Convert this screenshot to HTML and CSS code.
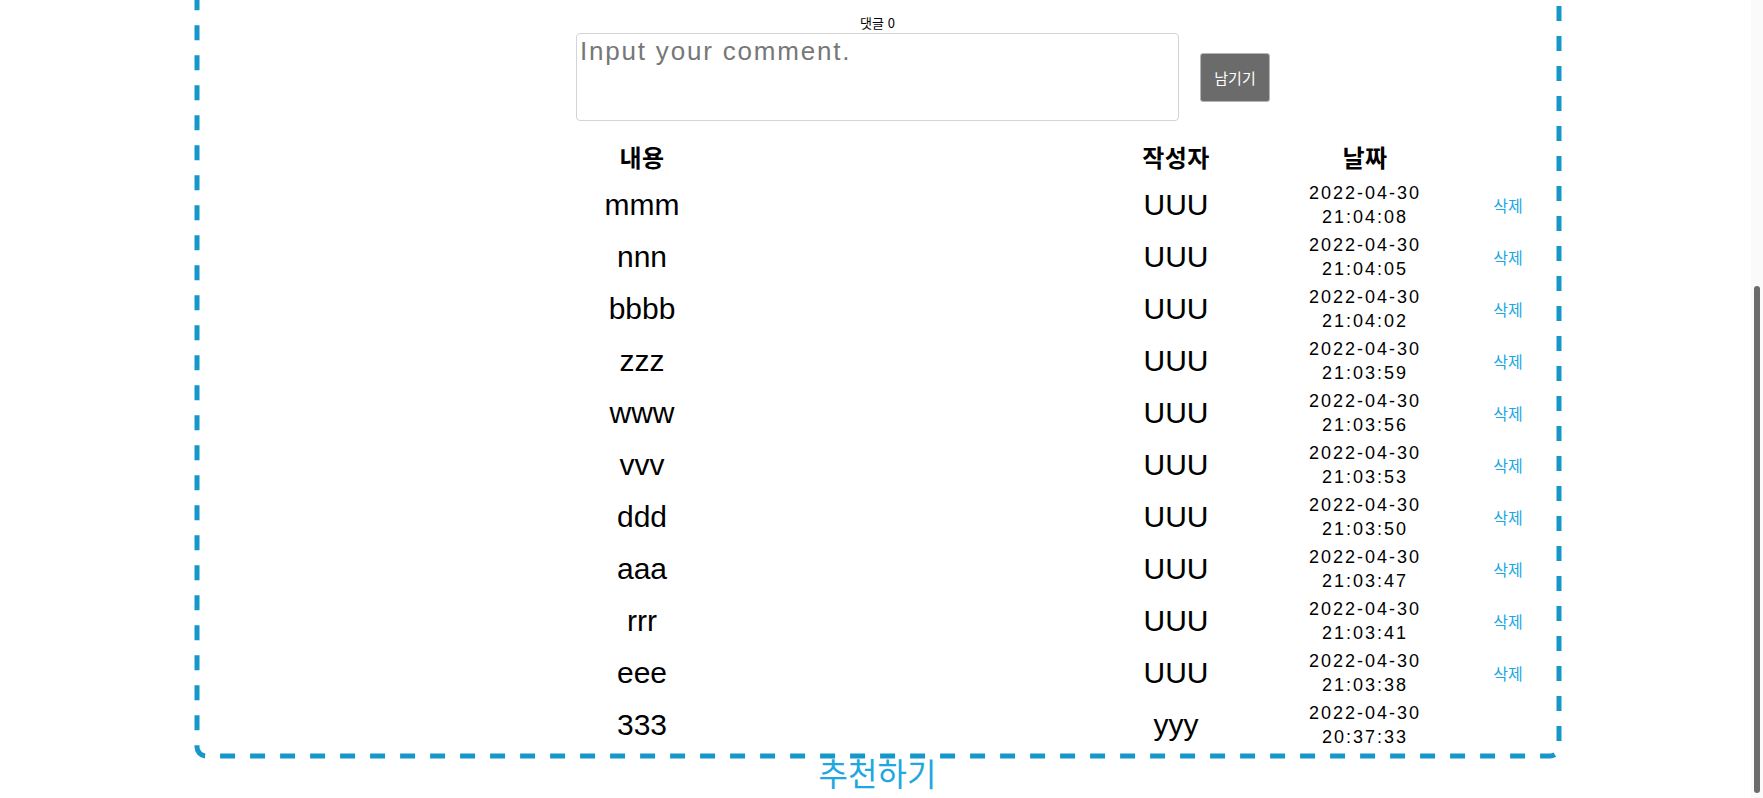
FILE: index.html
```html
<!DOCTYPE html>
<html lang="ko">
<head>
<meta charset="utf-8">
<title>게시글</title>
<link rel="stylesheet" href="styles.css">
</head>
<body>
<main class="page">
  <section class="post-box">
    <svg class="dash-frame" aria-hidden="true"><rect class="dash-rect" x="0" y="0" width="100%" height="100%" rx="9" ry="9"></rect></svg>
    <div class="post-body"></div>
    <div class="comments">
      <p class="comment-count">댓글 0</p>
      <form class="comment-form">
        <textarea class="comment-input" placeholder="Input your comment."></textarea>
        <button type="button" class="submit-btn">남기기</button>
      </form>
      <div class="comment-table">
        <div class="row head">
          <div class="cell c-content">내용</div>
          <div class="cell c-author">작성자</div>
          <div class="cell c-date">날짜</div>
          <div class="cell c-del"></div>
        </div>
        <div class="row"><div class="cell c-content">mmm</div><div class="cell c-author">UUU</div><div class="cell c-date">2022-04-30<br>21:04:08</div><div class="cell c-del"><a class="del">삭제</a></div></div>
        <div class="row"><div class="cell c-content">nnn</div><div class="cell c-author">UUU</div><div class="cell c-date">2022-04-30<br>21:04:05</div><div class="cell c-del"><a class="del">삭제</a></div></div>
        <div class="row"><div class="cell c-content">bbbb</div><div class="cell c-author">UUU</div><div class="cell c-date">2022-04-30<br>21:04:02</div><div class="cell c-del"><a class="del">삭제</a></div></div>
        <div class="row"><div class="cell c-content">zzz</div><div class="cell c-author">UUU</div><div class="cell c-date">2022-04-30<br>21:03:59</div><div class="cell c-del"><a class="del">삭제</a></div></div>
        <div class="row"><div class="cell c-content">www</div><div class="cell c-author">UUU</div><div class="cell c-date">2022-04-30<br>21:03:56</div><div class="cell c-del"><a class="del">삭제</a></div></div>
        <div class="row"><div class="cell c-content">vvv</div><div class="cell c-author">UUU</div><div class="cell c-date">2022-04-30<br>21:03:53</div><div class="cell c-del"><a class="del">삭제</a></div></div>
        <div class="row"><div class="cell c-content">ddd</div><div class="cell c-author">UUU</div><div class="cell c-date">2022-04-30<br>21:03:50</div><div class="cell c-del"><a class="del">삭제</a></div></div>
        <div class="row"><div class="cell c-content">aaa</div><div class="cell c-author">UUU</div><div class="cell c-date">2022-04-30<br>21:03:47</div><div class="cell c-del"><a class="del">삭제</a></div></div>
        <div class="row"><div class="cell c-content">rrr</div><div class="cell c-author">UUU</div><div class="cell c-date">2022-04-30<br>21:03:41</div><div class="cell c-del"><a class="del">삭제</a></div></div>
        <div class="row"><div class="cell c-content">eee</div><div class="cell c-author">UUU</div><div class="cell c-date">2022-04-30<br>21:03:38</div><div class="cell c-del"><a class="del">삭제</a></div></div>
        <div class="row"><div class="cell c-content">333</div><div class="cell c-author">yyy</div><div class="cell c-date">2022-04-30<br>20:37:33</div><div class="cell c-del"></div></div>
      </div>
    </div>
  </section>
  <p class="recommend">추천하기</p>
</main>
<div class="scrollbar" aria-hidden="true"><div class="scroll-thumb"></div></div>
<script src="script.js"></script>
</body>
</html>
```

FILE: styles.css
```css
html {
  background: #ffffff;
}
body {
  margin: 0;
  font-family: "Liberation Sans", "Noto Sans CJK KR", sans-serif;
  color: #000;
}
.page {
  padding: 8px 0 12px;
}
.post-box {
  position: relative;
  box-sizing: border-box;
  width: 1367px;
  margin-left: 194px;
  padding: 5px 5px 7px;
}
.dash-frame {
  position: absolute;
  top: 2.5px;
  left: 2.5px;
  width: calc(100% - 5px);
  height: calc(100% - 5px);
  overflow: visible;
  pointer-events: none;
}
.dash-rect {
  fill: none;
  stroke: #1597c9;
  stroke-width: 5;
  stroke-dasharray: 15 15;
  stroke-dashoffset: 28;
}
.post-body {
  height: 460px;
}
.comments {
  display: flex;
  flex-direction: column;
  align-items: center;
}
.comment-count {
  margin: 0 0 3px;
  font-family: "Noto Sans CJK KR", "Liberation Sans", sans-serif;
  font-size: 13px;
  line-height: 15px;
  height: 15px;
}
.comment-form {
  display: flex;
  align-items: center;
  gap: 21px;
  width: 603px;
  margin: 0;
}
.comment-input {
  flex: 0 0 603px;
  box-sizing: border-box;
  height: 88px;
  margin: 0;
  padding: 2px 3px;
  border: 1px solid #d4d4d4;
  border-radius: 4px;
  resize: none;
  font-family: "Liberation Sans", sans-serif;
  font-size: 26px;
  letter-spacing: 1.8px;
  line-height: 30px;
}
.comment-input::placeholder {
  color: #777777;
}
.submit-btn {
  flex: 0 0 70px;
  box-sizing: border-box;
  height: 49px;
  padding: 0;
  background: #6b6b6b;
  color: #ffffff;
  border: 1px solid #b5b5b5;
  border-radius: 3px;
  font-family: "Noto Sans CJK KR", sans-serif;
  font-size: 15px;
}
.comment-table {
  margin-top: 18px;
  width: 603px;
}
.row {
  display: grid;
  grid-template-columns: 132px 534px 246px 40px;
  width: 952px;
  height: 52px;
  align-items: center;
}
.row.head {
  height: 40px;
  align-items: start;
}
.cell {
  text-align: center;
  white-space: nowrap;
}
.c-content,
.c-author {
  font-size: 30px;
  line-height: 36px;
}
.c-author {
  justify-self: end;
  width: 132px;
}
.c-date {
  font-size: 18px;
  letter-spacing: 2px;
  line-height: 24px;
}
.head .cell {
  font-family: "Noto Sans CJK KR", sans-serif;
  font-weight: bold;
  font-size: 24px;
  line-height: 36px;
  letter-spacing: 0.5px;
}
.del {
  font-family: "Noto Sans CJK KR", sans-serif;
  font-size: 16px;
  color: #1ba8e4;
  cursor: pointer;
}
.recommend {
  margin: 0;
  width: 1755px;
  text-align: center;
  font-family: "Noto Sans CJK KR", sans-serif;
  font-size: 32px;
  line-height: 28px;
  color: #1fa7e0;
}
.scrollbar {
  position: fixed;
  top: 0;
  right: 0;
  width: 12px;
  height: 100%;
  background: #fafafa;
}
.scroll-thumb {
  position: absolute;
  top: 286px;
  left: 3px;
  width: 6px;
  height: 507px;
  border-radius: 3px;
  background: #6b6b6b;
}
```

FILE: script.js
```js
window.scrollTo(0, document.documentElement.scrollHeight);
window.addEventListener('load', function () {
  window.scrollTo(0, document.documentElement.scrollHeight);
});
```
